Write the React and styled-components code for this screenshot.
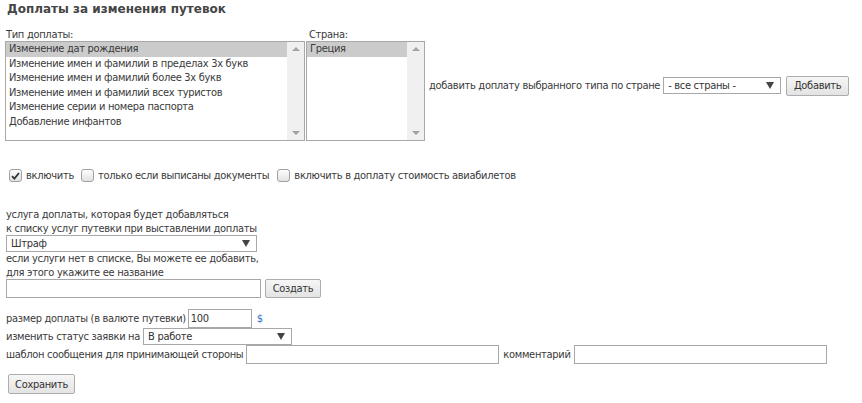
import React from "react";
import styled, { createGlobalStyle } from "styled-components";

const Global = createGlobalStyle`
  html, body { margin: 0; padding: 0; background: #fff; }
  body {
    font-family: "DejaVu Sans Condensed", "DejaVu Sans", sans-serif;
    font-size: 11px;
    letter-spacing: -0.3px;
    color: #3a3a3a;
  }
`;

const Page = styled.div`
  padding: 0 5px;
  width: 852px;
`;

const Title = styled.h2`
  margin: 0;
  padding: 2px 0 0 2px;
  font-family: "DejaVu Sans", sans-serif;
  font-size: 12px;
  letter-spacing: 0;
  font-weight: bold;
  color: #454545;
  line-height: 15px;
  height: 26px;
`;

const TopRow = styled.div`
  display: flex;
  align-items: center;
`;

const ListGroup = styled.div`
  display: flex;
  flex-direction: column;
  margin-right: ${(p) => p.$mr || 0}px;
`;

const Label = styled.div`
  line-height: 13px;
  padding-left: ${(p) => p.$pl || 1}px;
`;

const ListBox = styled.div`
  display: flex;
  width: ${(p) => p.$w}px;
  height: 100px;
  box-sizing: border-box;
  border: 1px solid #a8a8a8;
  background: #fff;
`;

const Options = styled.div`
  flex: 1;
`;

const Option = styled.div`
  height: 14.5px;
  line-height: 14px;
  padding-left: 3px;
  white-space: nowrap;
  background: ${(p) => (p.$sel ? "#cbcbcb" : "transparent")};
`;

const Scroll = styled.div`
  width: 17px;
  background: #f0f0f0;
  display: flex;
  flex-direction: column;
  justify-content: space-between;
  align-items: center;
  padding: 5px 0;
  box-sizing: border-box;
`;

const Arrow = styled.div`
  width: 0;
  height: 0;
  border-left: 4px solid transparent;
  border-right: 4px solid transparent;
  ${(p) => (p.$down ? "border-top: 4px solid #a3a3a3;" : "border-bottom: 4px solid #a3a3a3;")}
`;

const Text = styled.span`
  white-space: nowrap;
  margin: ${(p) => p.$m || "0"};
`;

const Select = styled.div`
  display: inline-flex;
  align-items: center;
  justify-content: space-between;
  white-space: nowrap;
  box-sizing: border-box;
  width: ${(p) => p.$w}px;
  height: ${(p) => p.$h || 17}px;
  border: 1px solid #a8a8a8;
  background: #fff;
  padding: 0 6px 0 4px;
  color: #333;
  line-height: 14px;
  margin: ${(p) => p.$m || "0"};
`;

const Caret = styled.span`
  width: 0;
  height: 0;
  border-left: 4px solid transparent;
  border-right: 4px solid transparent;
  border-top: 7px solid #444;
`;

const Button = styled.button`
  font-family: inherit;
  font-size: 11px;
  letter-spacing: -0.3px;
  color: #333;
  box-sizing: border-box;
  width: ${(p) => p.$w}px;
  height: ${(p) => p.$h || 20}px;
  padding: 0;
  border: 1px solid #adadad;
  border-radius: 2px;
  background: linear-gradient(#f6f6f6, #e3e3e3);
  margin: ${(p) => p.$m || "0"};
`;

const Input = styled.div`
  box-sizing: border-box;
  width: ${(p) => p.$w}px;
  height: ${(p) => p.$h || 19}px;
  border: 1px solid #a8a8a8;
  background: #fff;
  padding: 0 2px;
  line-height: 17px;
  color: #333;
  margin: ${(p) => p.$m || "0"};
`;

const CheckRow = styled.div`
  display: flex;
  align-items: center;
  margin-top: 27px;
  padding-left: 4px;
  height: 15px;
`;

const Box = styled.span`
  width: 11px;
  height: 11px;
  border: 1px solid #a0a0a0;
  border-radius: 3px;
  background: linear-gradient(#fdfdfd, #e2e2e2);
  display: inline-flex;
  align-items: center;
  justify-content: center;
  margin: ${(p) => p.$m || "0 4px 0 0"};
`;

const Block = styled.div`
  margin-top: ${(p) => p.$mt || 0}px;
  padding-left: 1px;
`;

const Line = styled.div`
  line-height: 13.5px;
  white-space: nowrap;
`;

const Row = styled.div`
  display: flex;
  align-items: center;
  margin-top: ${(p) => p.$mt || 0}px;
`;

const Dollar = styled.span`
  color: #2f6fb8;
  margin-left: 5px;
`;

export default function App() {
  const types = [
    "Изменение дат рождения",
    "Изменение имен и фамилий в пределах 3х букв",
    "Изменение имен и фамилий более 3х букв",
    "Изменение имен и фамилий всех туристов",
    "Изменение серии и номера паспорта",
    "Добавление инфантов",
  ];
  return (
    <Page>
      <Global />
      <Title>Доплаты за изменения путевок</Title>
      <TopRow>
        <ListGroup $mr={1}>
          <Label>Тип доплаты:</Label>
          <ListBox $w={300}>
            <Options>
              {types.map((t, i) => (
                <Option key={t} $sel={i === 0}>{t}</Option>
              ))}
            </Options>
            <Scroll><Arrow /><Arrow $down /></Scroll>
          </ListBox>
        </ListGroup>
        <ListGroup $mr={4}>
          <Label $pl={3}>Страна:</Label>
          <ListBox $w={119}>
            <Options>
              <Option $sel>Греция</Option>
            </Options>
            <Scroll><Arrow /><Arrow $down /></Scroll>
          </ListBox>
        </ListGroup>
        <Text $m="2px 3px 0 0">добавить доплату выбранного типа по стране</Text>
        <Select $w={118} $m="2px 0 0 0">- все страны -<Caret /></Select>
        <Button $m="2px 0 0 5px" $w={63}>Добавить</Button>
      </TopRow>

      <CheckRow>
        <Box>
          <svg width="9" height="8" viewBox="0 0 9 8"><path d="M1 4.2 L3.4 6.6 L8 1" stroke="#333" strokeWidth="1.8" fill="none" /></svg>
        </Box>
        <Text>включить</Text>
        <Box $m="0 4px 0 7px" />
        <Text>только если выписаны документы</Text>
        <Box $m="0 4px 0 8px" />
        <Text>включить в доплату стоимость авиабилетов</Text>
      </CheckRow>

      <Block $mt={25}>
        <Line>услуга доплаты, которая будет добавляться</Line>
        <Line>к списку услуг путевки при выставлении доплаты</Line>
        <Select $w={251} $h={17}>Штраф<Caret /></Select>
        <Line>если услуги нет в списке, Вы можете ее добавить,</Line>
        <Line>для этого укажите ее название</Line>
        <Row>
          <Input $w={255} />
          <Button $m="0 0 0 4px" $h={19} $w={56}>Создать</Button>
        </Row>
      </Block>

      <Block $mt={11}>
        <Row>
          <Text $m="0 2px 0 0">размер доплаты (в валюте путевки)</Text>
          <Input $w={64}>100</Input>
          <Dollar>$</Dollar>
        </Row>
        <Row>
          <Text $m="0 3px 0 0">изменить статус заявки на</Text>
          <Select $w={149}>В работе<Caret /></Select>
        </Row>
        <Row>
          <Text $m="0 3px 0 0">шаблон сообщения для принимающей стороны</Text>
          <Input $w={253} />
          <Text $m="0 3px 0 4px">комментарий</Text>
          <Input $w={253} />
        </Row>
        <Row $mt={10}>
          <Button $m="0 0 0 2px" $h={20} $w={67}>Сохранить</Button>
        </Row>
      </Block>
    </Page>
  );
}
